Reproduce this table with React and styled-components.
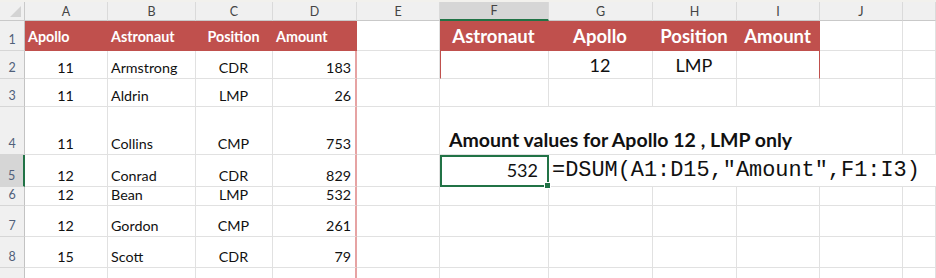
import React from 'react';
import styled, { createGlobalStyle, css } from 'styled-components';

const GlobalStyle = createGlobalStyle`
  html, body { margin: 0; padding: 0; background: #fff; }
  body { font-family: 'Lato', 'Open Sans', sans-serif; }
`;

const COLS = ['A', 'B', 'C', 'D', 'E', 'F', 'G', 'H', 'I', 'J', ''];
const COL_WIDTHS = [25, 83, 88, 77, 84, 83, 109, 104, 84, 83, 83, 33];
const ROW_HEIGHTS = [30, 28, 28, 48, 32, 19, 31, 31, 31];

const RED = '#c0504d';
const GRID = '#e1e1e1';
const GREEN = '#217346';

const Sheet = styled.div`
  display: grid;
  grid-template-columns: ${COL_WIDTHS.map(w => `${w}px`).join(' ')};
  grid-template-rows: 19px ${ROW_HEIGHTS.map(h => `${h}px`).join(' ')};
  width: 936px;
  height: 278px;
  border-top: 2px solid #f2f1ed;
  box-sizing: border-box;
  overflow: hidden;
`;

const Corner = styled.div`
  position: relative;
  background: #f0f0f0;
  border-right: 1px solid #c9c9c9;
  border-bottom: 1px solid #c9c9c9;
  &::after {
    content: '';
    position: absolute;
    right: 3px;
    bottom: 3px;
    border-style: solid;
    border-width: 0 0 11px 11px;
    border-color: transparent transparent #d3d3d3 transparent;
  }
`;

const ColHeader = styled.div`
  display: flex;
  align-items: center;
  justify-content: center;
  background: ${p => (p.$selected ? '#d6d6d6' : '#f0f0f0')};
  border-right: 1px solid #dadada;
  border-bottom: ${p => (p.$selected ? `2px solid ${GREEN}` : '1px solid #c9c9c9')};
  color: #444;
  font-size: 12.5px;
  box-sizing: border-box;
`;

const RowHeader = styled.div`
  display: flex;
  align-items: flex-end;
  justify-content: center;
  padding-bottom: 3px;
  background: ${p => (p.$selected ? '#d6d6d6' : '#f0f0f0')};
  border-right: ${p => (p.$selected ? `2px solid ${GREEN}` : '1px solid #c3c3c3')};
  border-bottom: 1px solid #d6d6d6;
  color: #50607a;
  font-size: 12.5px;
  box-sizing: border-box;
`;

const justify = { left: 'flex-start', center: 'center', right: 'flex-end' };

const Cell = styled.div`
  display: flex;
  align-items: flex-end;
  justify-content: ${p => justify[p.$align || 'left']};
  padding: 0 4px 2px 3px;
  border-right: 1px solid ${GRID};
  border-bottom: 1px solid ${GRID};
  box-sizing: border-box;
  font-size: 14.3px;
  color: #111;
  white-space: nowrap;
  grid-column: ${p => (p.$span ? `span ${p.$span}` : 'auto')};

  ${p => p.$head && css`
    background: ${RED};
    border-color: ${RED};
    color: #fff;
    font-weight: 700;
    padding-bottom: 5px;
  `}
  ${p => p.$big && css`
    font-size: 18px;
  `}
  ${p => p.$big && p.$head && css`
    font-size: 18.5px;
    align-items: center;
    padding-bottom: 0;
    padding-top: 1px;
  `}
  ${p => p.$pink && css`
    border-right: 2px solid #e6a3a3;
  `}
  ${p => p.$redLeft && css`
    border-left: 1px solid ${RED};
  `}
  ${p => p.$redRight && css`
    border-right: 1px solid ${RED};
  `}
`;

const Note = styled(Cell)`
  font-weight: 700;
  font-size: 19.5px;
  padding-left: 9px;
  padding-bottom: 3px;
  border-right: none;
`;

const Active = styled(Cell)`
  position: relative;
  border: 2px solid ${GREEN};
  font-size: 18px;
  padding-right: 9px;
  align-items: center;
  &::after {
    content: '';
    position: absolute;
    right: -4px;
    bottom: -4px;
    width: 5px;
    height: 5px;
    background: ${GREEN};
    border: 1px solid #fff;
  }
`;

const Formula = styled(Cell)`
  font-family: 'Liberation Mono', 'Courier New', monospace;
  font-size: 21.9px;
  align-items: center;
  padding-left: 3px;
  padding-bottom: 0;
  border-right: none;
`;

const data = [
  ['11', 'Armstrong', 'CDR', '183'],
  ['11', 'Aldrin', 'LMP', '26'],
  ['11', 'Collins', 'CMP', '753'],
  ['12', 'Conrad', 'CDR', '829'],
  ['12', 'Bean', 'LMP', '532'],
  ['12', 'Gordon', 'CMP', '261'],
  ['15', 'Scott', 'CDR', '79'],
  ['', '', '', ''],
];

function LeftCells({ row }) {
  return (
    <>
      <Cell $align="center">{row[0]}</Cell>
      <Cell>{row[1]}</Cell>
      <Cell $align="center">{row[2]}</Cell>
      <Cell $align="right" $pink>{row[3]}</Cell>
      <Cell />
    </>
  );
}

// criteria range, note and the DSUM result live in columns F..K
function RightCells({ r }) {
  if (r === 0) {
    return (
      <>
        <Cell $redLeft />
        <Cell $big $align="center">12</Cell>
        <Cell $big $align="center">LMP</Cell>
        <Cell $redRight />
        <Cell />
        <Cell />
      </>
    );
  }
  if (r === 2) {
    return (
      <>
        <Note $span={4}>Amount values for Apollo 12 , LMP only</Note>
        <Cell />
        <Cell />
      </>
    );
  }
  if (r === 3) {
    return (
      <>
        <Active $align="right">532</Active>
        <Formula $span={5}>=DSUM(A1:D15,"Amount",F1:I3)</Formula>
      </>
    );
  }
  return Array.from({ length: 6 }, (_, i) => <Cell key={i} />);
}

export default function App() {
  return (
    <>
      <GlobalStyle />
      <Sheet>
        <Corner />
        {COLS.map((c, i) => (
          <ColHeader key={i} $selected={c === 'F'}>{c}</ColHeader>
        ))}

        <RowHeader>1</RowHeader>
        <Cell $head>Apollo</Cell>
        <Cell $head>Astronaut</Cell>
        <Cell $head $align="center">Position</Cell>
        <Cell $head>Amount</Cell>
        <Cell />
        <Cell $head $big $align="center">Astronaut</Cell>
        <Cell $head $big $align="center">Apollo</Cell>
        <Cell $head $big $align="center">Position</Cell>
        <Cell $head $big $align="center">Amount</Cell>
        <Cell />
        <Cell />

        {data.map((row, r) => (
          <React.Fragment key={r}>
            {/* last row is cut off by the window, its number is out of view */}
            <RowHeader $selected={r === 3}>{r < data.length - 1 ? r + 2 : ''}</RowHeader>
            <LeftCells row={row} />
            <RightCells r={r} />
          </React.Fragment>
        ))}
      </Sheet>
    </>
  );
}
